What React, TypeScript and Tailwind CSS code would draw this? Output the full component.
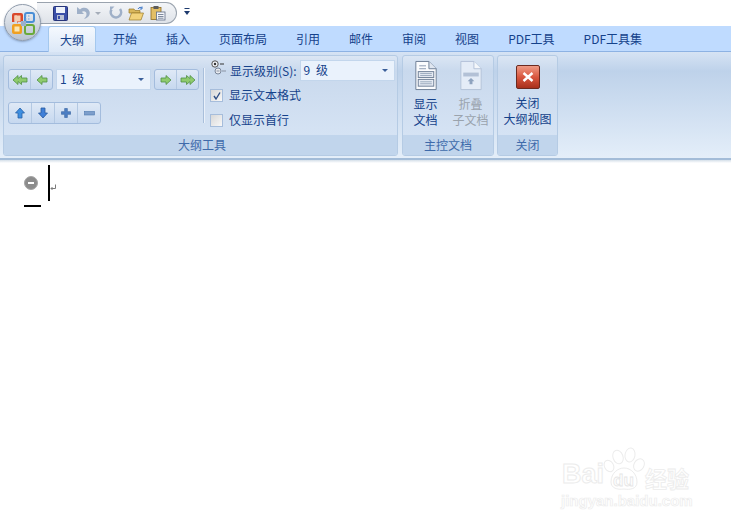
import React from "react";

const cjk = { fontFamily: '"Noto Sans CJK SC", sans-serif' };

function Arrow({ rot = 0, fill = "#8fcb6e", stroke = "#4f8f45" }: { rot?: number; fill?: string; stroke?: string }) {
  return (
    <svg width="12" height="12" viewBox="0 0 12 12" style={{ transform: `rotate(${rot}deg)` }}>
      <path d="M1 6 L6 1.5 V4 H11 V8 H6 V10.5 Z" fill={fill} stroke={stroke} strokeWidth="0.8" />
    </svg>
  );
}

function DoubleArrow({ right = false }: { right?: boolean }) {
  return (
    <svg width="16" height="12" viewBox="0 0 16 12" style={{ transform: right ? "rotate(180deg)" : undefined }}>
      <path d="M1 6 L6 1.5 V4.5 L9.5 1.5 V4 H15 V8 H9.5 V10.5 L6 7.5 V10.5 Z" fill="#8fcb6e" stroke="#4f8f45" strokeWidth="0.8" />
    </svg>
  );
}

function Seg({ children, w }: { children: React.ReactNode; w: string }) {
  return <div className={`flex items-center justify-center h-full border-r border-[#b3c8e2] last:border-r-0 ${w}`}>{children}</div>;
}

function SegGroup({ children, h }: { children: React.ReactNode; h: string }) {
  return (
    <div className={`flex rounded-[3px] border border-[#a3bcdd] bg-gradient-to-b from-[#dfe9f6] to-[#c6d8ef] ${h}`}>{children}</div>
  );
}

function Combo({ label, w, h }: { label: string; w: string; h: string }) {
  return (
    <div className={`flex items-center justify-between bg-[#eaf2fc] border border-[#c3d6ec] pl-[3px] pr-[6px] text-[12px] text-[#15428b] ${w} ${h}`}>
      <span className="-mt-[2px] [word-spacing:3px]">{label}</span>
      <span className="w-0 h-0 border-x-[3.5px] border-x-transparent border-t-[3.5px] border-t-[#3a5f9a]" />
    </div>
  );
}

function Check({ checked, label }: { checked?: boolean; label: string }) {
  return (
    <div className="flex items-center h-[25px]">
      <div className="w-[13px] h-[13px] border border-[#a6bddb] bg-gradient-to-br from-[#d8d8d8] to-[#f8f8f8] flex items-center justify-center">
        {checked && (
          <svg width="10" height="10" viewBox="0 0 10 10">
            <path d="M2 5 L4 8 L8 1.5" fill="none" stroke="#2f4f86" strokeWidth="1.4" />
          </svg>
        )}
      </div>
      <span className="ml-[6px] -mt-[1px] text-[12px] text-[#15428b] leading-none">{label}</span>
    </div>
  );
}

function DocIcon({ faded }: { faded?: boolean }) {
  if (faded)
    return (
      <svg width="24" height="31" viewBox="0 0 24 32">
        <path d="M1.5 1.5 H15 L22.5 9 V30.5 H1.5 Z" fill="#e4ecf7" stroke="#b4c2d8" />
        <path d="M15 1.5 V9 H22.5" fill="#f4f7fb" stroke="#b4c2d8" />
        <rect x="4" y="13" width="16" height="4" fill="#b3c1d6" />
        <path d="M12 18.5 L15.5 22 H13.5 V25 H10.5 V22 H8.5 Z" fill="#8ea3bf" />
      </svg>
    );
  return (
    <svg width="24" height="31" viewBox="0 0 24 32">
      <path d="M1.5 1.5 H15 L22.5 9 V30.5 H1.5 Z" fill="#fbfcfe" stroke="#6e7f96" />
      <path d="M15 1.5 V9 H22.5" fill="#dfe6f0" stroke="#6e7f96" />
      <path d="M5 6 H12 M5 9 H12" stroke="#8c9cb2" />
      <rect x="4" y="12" width="16" height="6" fill="#e6ebf3" stroke="#6e7f96" />
      <path d="M6 14 H18 M6 16 H18" stroke="#9aa9bd" />
      <rect x="4" y="20" width="16" height="7" fill="#e6ebf3" stroke="#6e7f96" />
      <path d="M6 22.5 H18 M6 24.5 H18" stroke="#9aa9bd" />
    </svg>
  );
}

function Group({ title, w, cap, children }: { title: string; w: string; cap?: string; children: React.ReactNode }) {
  return (
    <div className={`flex flex-col h-[101px] rounded-[3px] border border-[#b5cbe4] bg-gradient-to-b from-[#dbe6f4] via-[#c9d9ed] via-[15%] to-[#d9e6f6] overflow-hidden ${w}`}>
      <div className="flex-1 min-h-0">{children}</div>
      <div className={`h-[20px] shrink-0 bg-[#c1d5ec] flex items-center justify-center text-[12px] leading-none text-[#3e6aaa] ${cap ?? ""}`}>{title}</div>
    </div>
  );
}

const tabs = ["开始", "插入", "页面布局", "引用", "邮件", "审阅", "视图", "PDF工具", "PDF工具集"];

export default function App() {
  return (
    <div className="relative w-[731px] h-[525px] bg-white overflow-hidden" style={cjk}>
      {/* Title / quick access */}
      <div className="h-[26px] pl-[37px] pt-[2px] flex items-start">
        <div className="h-[22px] w-[140px] rounded-r-[11px] border border-l-0 border-[#9aa3ae] bg-gradient-to-b from-[#f3f5f8] to-[#dfe3e9] flex items-center pl-[16px] gap-[6px]">
          <svg width="15" height="15" viewBox="0 0 15 15">
            <rect x="0.5" y="0.5" width="14" height="14" rx="1" fill="#3b4fa8" stroke="#27357a" />
            <rect x="3" y="1" width="9" height="6" fill="#eef2fa" />
            <rect x="4" y="9" width="7" height="5" fill="#b9c0d4" />
            <rect x="5" y="10" width="2" height="3" fill="#3b4fa8" />
          </svg>
          <svg width="15" height="14" viewBox="0 0 15 14" className="ml-[2px]">
            <path d="M1 1 V8 H8 L5.8 5.8 C8 4.6 10.5 5.5 10.5 8 C10.5 10 9.5 11.5 8 13 C12.5 12 14.5 8.5 13.5 5.5 C12.5 2 8 0.5 4 3.4 Z" fill="#9fb0c8" />
          </svg>
          <span className="-ml-[2px] w-0 h-0 border-x-[3px] border-x-transparent border-t-[3px] border-t-[#a5adb9]" />
          <svg width="14" height="14" viewBox="0 0 14 14" className="ml-[2px]">
            <path d="M2.5 3.5 A5.2 5.2 0 1 0 11 3" fill="none" stroke="#9fb0c8" strokeWidth="2.6" />
            <path d="M5.5 0.5 H1 V5 Z" fill="#9fb0c8" />
          </svg>
          <svg width="17" height="15" viewBox="0 0 17 15" className="-ml-[1px]">
            <path d="M1 3 H6 L7 4.5 H12 V7 H1 Z" fill="#d9b65a" stroke="#9a7a2a" strokeWidth="0.7" />
            <path d="M1 14 L3.5 7 H15.5 L13 14 Z" fill="#f2d27a" stroke="#9a7a2a" strokeWidth="0.7" />
            <path d="M10 3 C11 1 13 1 14 2 M14 0.5 V3 H11.8" fill="none" stroke="#3f78c8" strokeWidth="1" />
          </svg>
          <svg width="16" height="16" viewBox="0 0 16 16" className="-ml-[1px]">
            <rect x="1" y="2.5" width="10" height="12" fill="#e3bf66" stroke="#8d6c24" strokeWidth="0.8" />
            <rect x="3.5" y="1" width="5" height="3" fill="#5c5c5c" />
            <rect x="6.5" y="7" width="8.5" height="8" fill="#f4f6fa" stroke="#5f6d85" strokeWidth="0.8" />
            <path d="M8 9.5 H13.5 M8 11.5 H13.5 M8 13.2 H13.5" stroke="#5f6d85" strokeWidth="0.8" />
          </svg>
        </div>
        <svg width="7" height="10" viewBox="0 0 7 10" className="ml-[7px] mt-[5px]">
          <path d="M0.5 1 H5.5 V2 H0.5 Z M0 4 H6 L3 8 Z" fill="#1d3a6e" />
        </svg>
      </div>

      {/* Tab strip */}
      <div className="h-[26px] bg-[#bfdbff] border-b border-[#8db2e3] flex items-end pl-[48px] gap-[5px] text-[12px] text-[#15428b]">
        <div className="h-[26px] px-3 -mb-px flex items-center rounded-t-[3px] border border-b-0 border-[#a4c8ee] bg-gradient-to-b from-[#f5f9fe] to-[#dce8f7]">
          <span className="-mx-px">大纲</span>
        </div>
        {tabs.map((t) => (
          <div key={t} className="h-[25px] px-3 flex items-center whitespace-nowrap">{t}</div>
        ))}
      </div>

      {/* Ribbon */}
      <div className="h-[108px] flex pl-[3px] pt-[3px] bg-gradient-to-b from-[#d6e3f4] via-[#bed2ea] via-[18%] to-[#e4eef9] border-b-2 border-[#a3bcd8]">
        <Group title="大纲工具" w="w-[395px]" cap="pl-[3px]">
          <div className="flex h-full pl-[4px]">
            <div className="pt-[13px] w-[195px]">
              <div className="flex gap-[3px]">
                <SegGroup h="h-[21px]">
                  <Seg w="w-[22px]"><DoubleArrow /></Seg>
                  <Seg w="w-[21px]"><Arrow /></Seg>
                </SegGroup>
                <Combo label="1 级" w="w-[95px]" h="h-[21px]" />
                <SegGroup h="h-[21px]">
                  <Seg w="w-[22px]"><Arrow rot={180} /></Seg>
                  <Seg w="w-[21px]"><DoubleArrow right /></Seg>
                </SegGroup>
              </div>
              <div className="mt-[12px] w-[93px]">
                <SegGroup h="h-[22px]">
                  <Seg w="w-[23px]"><Arrow rot={90} fill="#3f8fe0" stroke="#2a62a8" /></Seg>
                  <Seg w="w-[24px]"><Arrow rot={270} fill="#3f7fd8" stroke="#2a5aa0" /></Seg>
                  <Seg w="w-[24px]">
                    <svg width="10" height="10" viewBox="0 0 11 11"><path d="M4 0.5 H7 V4 H10.5 V7 H7 V10.5 H4 V7 H0.5 V4 H4 Z" fill="#4d7fc4" stroke="#2d5a9a" strokeWidth="0.6" /></svg>
                  </Seg>
                  <Seg w="w-[22px]">
                    <svg width="11" height="5" viewBox="0 0 11 5"><rect x="0.5" y="0.5" width="10" height="3.5" fill="#7d9ecb" stroke="#4e78b0" strokeWidth="0.6" /></svg>
                  </Seg>
                </SegGroup>
              </div>
            </div>
            <div className="w-[2px] h-[55px] mt-[12px] bg-[#a9bfdb] border-r border-[#eaf1fa]" />
            <div className="ml-[5px] pt-[4px] flex-1">
              <div className="flex items-center h-[21px]">
                <svg width="15" height="15" viewBox="0 0 15 15" className="ml-[1px] -mt-[6px]">
                  <circle cx="4" cy="4" r="3.2" fill="#f0f3f8" stroke="#555" />
                  <circle cx="4" cy="4" r="1.2" fill="#333" />
                  <path d="M9 4 H13" stroke="#333" />
                  <circle cx="7" cy="11" r="3" fill="#e8ebf0" stroke="#7a8699" />
                  <path d="M5.5 11 H8.5 M11 11 H15" stroke="#8a93a3" />
                </svg>
                <span className="ml-[4px] text-[12px] text-[#15428b] whitespace-nowrap leading-none">显示级别(S):</span>
                <div className="ml-[3px]"><Combo label="9 级" w="w-[95px]" h="h-[21px] border-[#a9c3e2]" /></div>
              </div>
              <div className="mt-[2px]"><Check checked label="显示文本格式" /></div>
              <Check label="仅显示首行" />
            </div>
          </div>
        </Group>

        <div className="ml-[4px]">
          <Group title="主控文档" w="w-[92px]">
            <div className="flex h-full pt-[4px] text-[12px] leading-[16px] text-center">
              <div className="w-[45px] flex flex-col items-center text-[#15428b]">
                <DocIcon />
                <div className="mt-[5px]">显示<br />文档</div>
              </div>
              <div className="flex-1 flex flex-col items-center text-[#9aa3ad]">
                <DocIcon faded />
                <div className="mt-[5px]">折叠<br />子文档</div>
              </div>
            </div>
          </Group>
        </div>

        <div className="ml-[3px]">
          <Group title="关闭" w="w-[61px]">
            <div className="flex flex-col items-center pt-[9px] text-[12px] leading-[16px] text-center text-[#15428b]">
              <div className="w-[24px] h-[24px] rounded-[2px] border border-[#6b2a20] bg-gradient-to-b from-[#ee9a85] via-[#d9573f] via-50% to-[#a8301c] flex items-center justify-center">
                <svg width="12" height="10" viewBox="0 0 12 10"><path d="M1.5 1 L10.5 9 M10.5 1 L1.5 9" stroke="#fff" strokeWidth="2.4" /></svg>
              </div>
              <div className="mt-[6px] whitespace-nowrap">关闭<br />大纲视图</div>
            </div>
          </Group>
        </div>
      </div>

      {/* Soft shadow below ribbon */}
      <div className="h-[3px] bg-gradient-to-b from-[#d5dfe9] to-white" />

      {/* Document */}
      <div className="flex pl-[24px] pt-[2px]">
        <div className="flex flex-col w-[24px]">
          <div className="mt-[11px] w-[14px] h-[14px] rounded-full bg-[#8c8c8c] border border-[#a6a6a6] flex items-center justify-center">
            <div className="w-[6px] h-[2px] bg-white" />
          </div>
          <div className="mt-[15px] w-[17px] h-[2px] bg-black" />
        </div>
        <div className="w-[2px] h-[36px] bg-black" />
        <svg width="7" height="7" viewBox="0 0 7 7" className="mt-[19px]">
          <path d="M5.5 0.5 V4.5 H1 M2.5 3 L1 4.5 L2.5 6" fill="none" stroke="#7a7a7a" strokeWidth="1" />
        </svg>
      </div>

      {/* Watermark */}
      <div className="absolute left-[561px] top-[446px] w-[170px] h-[70px]">
        <svg width="56" height="46" viewBox="0 0 56 46" className="absolute left-[36px] top-0">
          <g fill="white" stroke="#ececec" strokeWidth="1">
            <ellipse cx="21" cy="11" rx="5" ry="7" transform="rotate(-20 21 11)" />
            <ellipse cx="33" cy="9" rx="5" ry="7" transform="rotate(10 33 9)" />
            <ellipse cx="12" cy="20" rx="4.5" ry="6" transform="rotate(-30 12 20)" />
            <ellipse cx="42" cy="19" rx="5" ry="6.5" transform="rotate(30 42 19)" />
            <path d="M14 36 C14 27 21 22 27 22 C34 22 40 28 40 36 C40 43 33 44 27 43 C20 44 14 42 14 36 Z" />
          </g>
        </svg>
        <div className="absolute left-[1px] top-[12px] text-[27px] leading-[32px] font-bold text-white [-webkit-text-stroke:1px_#ececec] whitespace-nowrap" style={{ fontFamily: '"Liberation Sans", sans-serif' }}>Bai</div>
        <div className="absolute left-[52px] top-[27px] text-[17px] leading-[16px] font-bold text-white [-webkit-text-stroke:0.8px_#e6e6e6]" style={{ fontFamily: '"Liberation Sans", sans-serif' }}>du</div>
        <div className="absolute left-[84px] top-[18px] text-[22px] leading-[26px] font-bold text-white [-webkit-text-stroke:0.8px_#ececec] whitespace-nowrap">经验</div>
        <div className="absolute left-0 top-[46px] text-[15px] leading-[18px] font-bold text-white [-webkit-text-stroke:0.7px_#ececec] whitespace-nowrap" style={{ fontFamily: '"Liberation Sans", sans-serif' }}>jingyan.baidu.com</div>
      </div>

      {/* Office button */}
      <div className="absolute left-[4px] top-[4px] w-[37px] h-[37px] rounded-full border border-[#8f9bab] bg-gradient-to-b from-[#f2f4f7] to-[#b9c3d0] flex items-center justify-center shadow-[0_1px_2px_rgba(90,110,140,0.5)]">
        <svg width="24" height="24" viewBox="0 0 24 24">
          <path d="M1 4 Q1 2 3 2 H10 Q12 2 12 4 V11 H7 Q6 12 6 13 V4.5 H3.5 V11 H1 Z" fill="#d9482b" />
          <rect x="3.5" y="4.5" width="6" height="6" fill="#f6cdb0" />
          <rect x="1" y="13" width="10" height="10" rx="2" fill="#f0a020" />
          <rect x="3.5" y="15.5" width="5" height="5" fill="#fbe7b3" />
          <rect x="14" y="2" width="9" height="9" rx="2" fill="none" stroke="#4a8fd6" strokeWidth="2" />
          <path d="M14 5 H20 M14 8 H20" stroke="#6a9fd8" strokeDasharray="1.5 1.5" />
          <rect x="14" y="14" width="9" height="9" rx="2" fill="none" stroke="#6aaa3a" strokeWidth="2" />
          <rect x="10" y="10" width="5" height="5" fill="#9ab0cc" />
        </svg>
      </div>
    </div>
  );
}
